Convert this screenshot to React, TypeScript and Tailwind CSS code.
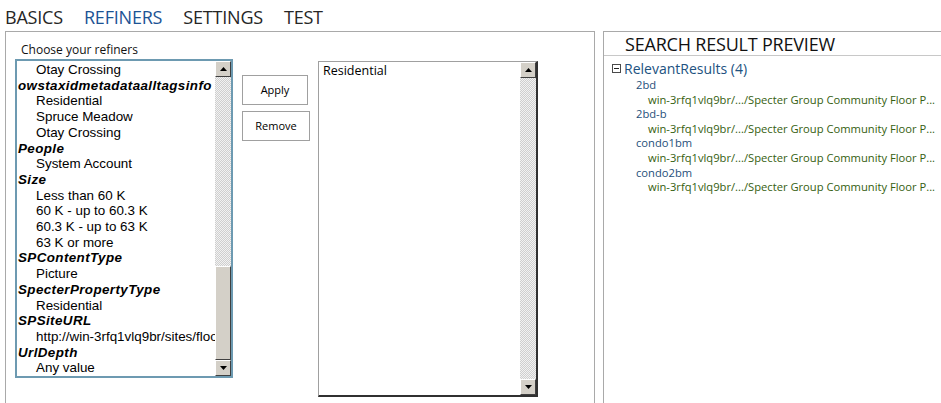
import React from 'react';

type Row = { text: string; head?: boolean };

const refiners: Row[] = [
    { text: 'Otay Crossing' },
    { text: 'owstaxidmetadataalltagsinfo', head: true },
    { text: 'Residential' },
    { text: 'Spruce Meadow' },
    { text: 'Otay Crossing' },
    { text: 'People', head: true },
    { text: 'System Account' },
    { text: 'Size', head: true },
    { text: 'Less than 60 K' },
    { text: '60 K - up to 60.3 K' },
    { text: '60.3 K - up to 63 K' },
    { text: '63 K or more' },
    { text: 'SPContentType', head: true },
    { text: 'Picture' },
    { text: 'SpecterPropertyType', head: true },
    { text: 'Residential' },
    { text: 'SPSiteURL', head: true },
    { text: 'http://win-3rfq1vlq9br/sites/floorplans' },
    { text: 'UrlDepth', head: true },
    { text: 'Any value' },
];

const results = ['2bd', '2bd-b', 'condo1bm', 'condo2bm'];

// little arrow box used on both ends of the fake scrollbars
const ArrowBox = ({ down }: { down?: boolean }) => (
    <div className="h-[16px] w-[16px] shrink-0 bg-[#d4d0c8] border-t border-l border-t-white border-l-white border-r border-b border-r-[#404040] border-b-[#404040] flex items-center justify-center">
        <svg width="7" height="4" viewBox="0 0 7 4">
            {down ? <path d="M0 0h7L3.5 4z" fill="#000" /> : <path d="M0 4h7L3.5 0z" fill="#000" />}
        </svg>
    </div>
);

const ScrollBar = ({ thumb }: { thumb?: boolean }) => (
    <div className="w-[16px] h-full flex flex-col shrink-0">
        <ArrowBox />
        <div className="flex-1 flex flex-col bg-[image:repeating-conic-gradient(#cfcfcf_0_25%,#f2f2f2_0_50%)] bg-[length:2px_2px]">
            {thumb && (
                <>
                    <div className="flex-1" />
                    <div className="h-[94px] bg-[#d4d0c8] border-t border-l border-white border-r border-b border-r-[#404040] border-b-[#404040]" />
                </>
            )}
        </div>
        <ArrowBox down />
    </div>
);

export default function App() {
    return (
        <div className="w-[941px] h-[403px] overflow-hidden bg-white text-black font-['Open_Sans',sans-serif]">
            {/* tabs */}
            <div className="h-[31px] flex items-center gap-[21px] pl-[5px] text-[18px] tracking-[-0.2px] pt-[3px]">
                <span className="text-[#262626]">BASICS</span>
                <span className="text-[#1c5394]">REFINERS</span>
                <span className="text-[#262626]">SETTINGS</span>
                <span className="text-[#262626]">TEST</span>
            </div>

            <div className="flex h-[372px]">
                {/* left panel */}
                <div className="ml-[5px] w-[590px] shrink-0 h-full border-l border-t border-r border-[#a9a9a9] pl-[9px] pt-[10px]">
                    <div className="pl-[6px] text-[12px] leading-[16px] text-[#111]">Choose your refiners</div>
                    <div className="flex mt-[1px]">
                        <div className="w-[218px] h-[319px] border-2 border-[#6d9ab1] flex overflow-hidden bg-white">
                            <div className="flex-1 overflow-hidden font-['Liberation_Sans',Arial,sans-serif] text-[13.4px] leading-[15.7px] mt-[1px] pl-[1px] whitespace-nowrap">
                                {refiners.map((r, i) => (
                                    <div key={i} className={r.head ? 'font-bold italic tracking-[0.4px]' : 'pl-[18px]'}>
                                        {r.text}
                                    </div>
                                ))}
                            </div>
                            <ScrollBar thumb />
                        </div>

                        <div className="flex flex-col gap-[6px] ml-[9px] mt-[16px] font-['Open_Sans',sans-serif] text-[11px]">
                            <button className="w-[66px] h-[30px] border border-[#a0a0a0] bg-white">Apply</button>
                            <button className="w-[68px] h-[30px] border border-[#a0a0a0] bg-white">Remove</button>
                        </div>

                        <div className="ml-[8px] mt-[2px] w-[220px] h-[336px] border border-[#a0a0a0] border-r-2 border-b-2 border-r-[#303030] border-b-[#303030] flex bg-white">
                            <div className="flex-1 pl-[4px] pt-[1px] text-[12.5px] leading-[16px]">Residential</div>
                            <ScrollBar />
                        </div>
                    </div>
                </div>

                {/* right panel */}
                <div className="ml-[8px] flex-1 min-w-0 overflow-hidden h-full border-l border-t border-[#a9a9a9]">
                    <div className="h-[24px] border-b border-[#c8c8c8] pl-[21px] text-[18px] leading-[24px] tracking-[-0.2px] text-[#111]">
                        SEARCH RESULT PREVIEW
                    </div>
                    <div className="pl-[8px] pt-[4px] text-[11.2px] leading-[14.6px]">
                        <div className="flex items-center gap-[3px] text-[14px] leading-[17px] text-[#21527f] mb-[1px]">
                            <svg width="9" height="9" viewBox="0 0 9 9" className="shrink-0">
                                <rect x="0.5" y="0.5" width="8" height="8" fill="#fff" stroke="#4a4a4a" />
                                <path d="M2 4.5h5" stroke="#222" />
                            </svg>
                            RelevantResults (4)
                        </div>
                        {results.map(r => (
                            <div key={r}>
                                <div className="pl-[24px] text-[#1f4f7a]">{r}</div>
                                <div className="pl-[36px] text-[#35600f] whitespace-nowrap">
                                    win-3rfq1vlq9br/.../Specter Group Community Floor P...
                                </div>
                            </div>
                        ))}
                    </div>
                </div>
            </div>
        </div>
    );
}
